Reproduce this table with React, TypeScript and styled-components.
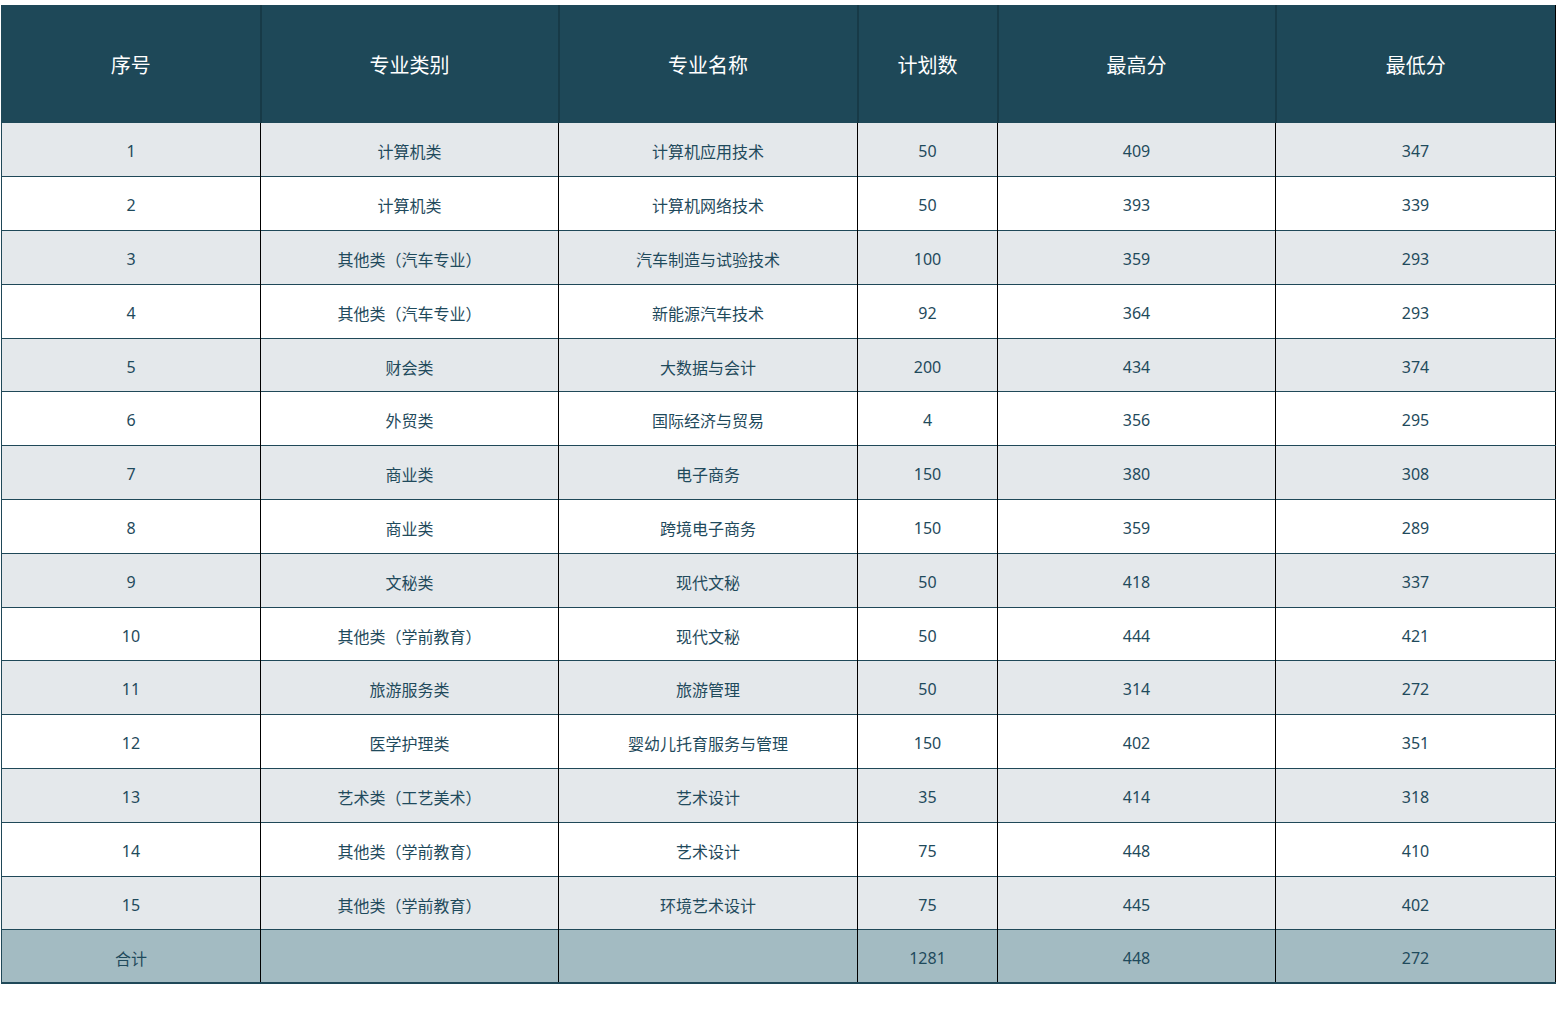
import styled, { createGlobalStyle } from "styled-components";

interface RowData {
    no: string,
    category: string,
    major: string,
    plan: string,
    high: string,
    low: string
}

const rows: RowData[] = [
    { no: "1", category: "计算机类", major: "计算机应用技术", plan: "50", high: "409", low: "347" },
    { no: "2", category: "计算机类", major: "计算机网络技术", plan: "50", high: "393", low: "339" },
    { no: "3", category: "其他类（汽车专业）", major: "汽车制造与试验技术", plan: "100", high: "359", low: "293" },
    { no: "4", category: "其他类（汽车专业）", major: "新能源汽车技术", plan: "92", high: "364", low: "293" },
    { no: "5", category: "财会类", major: "大数据与会计", plan: "200", high: "434", low: "374" },
    { no: "6", category: "外贸类", major: "国际经济与贸易", plan: "4", high: "356", low: "295" },
    { no: "7", category: "商业类", major: "电子商务", plan: "150", high: "380", low: "308" },
    { no: "8", category: "商业类", major: "跨境电子商务", plan: "150", high: "359", low: "289" },
    { no: "9", category: "文秘类", major: "现代文秘", plan: "50", high: "418", low: "337" },
    { no: "10", category: "其他类（学前教育）", major: "现代文秘", plan: "50", high: "444", low: "421" },
    { no: "11", category: "旅游服务类", major: "旅游管理", plan: "50", high: "314", low: "272" },
    { no: "12", category: "医学护理类", major: "婴幼儿托育服务与管理", plan: "150", high: "402", low: "351" },
    { no: "13", category: "艺术类（工艺美术）", major: "艺术设计", plan: "35", high: "414", low: "318" },
    { no: "14", category: "其他类（学前教育）", major: "艺术设计", plan: "75", high: "448", low: "410" },
    { no: "15", category: "其他类（学前教育）", major: "环境艺术设计", plan: "75", high: "445", low: "402" },
]

const headers = ["序号", "专业类别", "专业名称", "计划数", "最高分", "最低分"]
const widths = [259, 298, 299, 140, 278, 280]

export default function App() {
    return (
        <>
            <GlobalStyle />
            <Page>
                <Table>
                    <colgroup>
                        {widths.map((w, i) => <col key={i} style={{ width: w }} />)}
                    </colgroup>
                    <thead>
                        <HeadRow>
                            {headers.map(h => <HeadCell key={h}>{h}</HeadCell>)}
                        </HeadRow>
                    </thead>
                    <tbody>
                        {rows.map((r, index) => (
                            <BodyRow key={r.no} $shaded={index % 2 === 0}>
                                <Cell>{r.no}</Cell>
                                <Cell>{r.category}</Cell>
                                <Cell>{r.major}</Cell>
                                <Cell>{r.plan}</Cell>
                                <Cell>{r.high}</Cell>
                                <Cell>{r.low}</Cell>
                            </BodyRow>
                        ))}
                        <TotalRow>
                            <Cell>合计</Cell>
                            <Cell></Cell>
                            <Cell></Cell>
                            <Cell>1281</Cell>
                            <Cell>448</Cell>
                            <Cell>272</Cell>
                        </TotalRow>
                    </tbody>
                </Table>
            </Page>
        </>
    )
}

const GlobalStyle = createGlobalStyle`
    body {
        margin: 0;
        background: #fff;
        font-family: "Noto Sans", "Noto Sans CJK SC", sans-serif;
    }
`

const Page = styled.div`
    padding: 5px 4px 0 1px;
`

const Table = styled.table`
    width: 1554px;
    border-collapse: collapse;
    table-layout: fixed;
    border-left: 1px solid #1f4858;
    border-right: 1px solid #000;
`

const HeadRow = styled.tr`
    height: 118px;
    background-color: #1e4858;
`

const HeadCell = styled.th`
    color: #ffffff;
    font-weight: normal;
    font-size: 20px;
    text-align: center;
    padding: 0;
    border-left: 2px solid #173a47;
    &:first-child {
        border-left: none;
    }
`

const BodyRow = styled.tr<{ $shaded: boolean }>`
    height: 53.8px;
    background-color: ${p => p.$shaded ? "#e4e8eb" : "#ffffff"};
    border-bottom: 1px solid #1f4858;
`

const TotalRow = styled.tr`
    height: 53px;
    background-color: #a3bbc2;
    border-bottom: 2px solid #1f4858;
`

const Cell = styled.td`
    color: #1f4a5c;
    font-size: 16px;
    text-align: center;
    padding: 3px 0 0;
    border-left: 1px solid #000;
    &:first-child {
        border-left: none;
    }
`
